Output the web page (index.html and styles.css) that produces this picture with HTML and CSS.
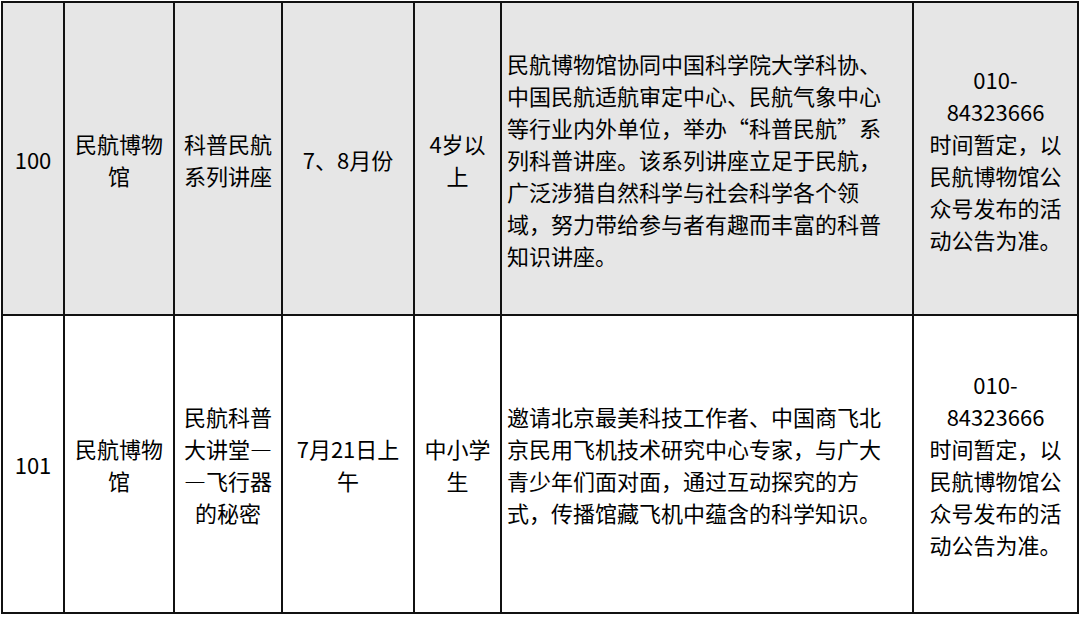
FILE: index.html
```html
<!DOCTYPE html>
<html lang="zh-CN">
<head>
<meta charset="utf-8">
<title>活动列表</title>
<link rel="stylesheet" href="styles.css">
</head>
<body>
<table class="events">
  <tbody>
    <tr class="row row-shaded">
      <td class="c-no">100</td>
      <td class="c-venue">民航博物馆</td>
      <td class="c-name">科普民航系列讲座</td>
      <td class="c-time">7、8月份</td>
      <td class="c-age">4岁以上</td>
      <td class="c-desc">民航博物馆协同中国科学院大学科协、中国民航适航审定中心、民航气象中心等行业内外单位，举办“科普民航”系列科普讲座。该系列讲座立足于民航，广泛涉猎自然科学与社会科学各个领域，努力带给参与者有趣而丰富的科普知识讲座。</td>
      <td class="c-note">010-84323666<br>时间暂定，以民航博物馆公众号发布的活动公告为准。</td>
    </tr>
    <tr class="row row-plain">
      <td class="c-no">101</td>
      <td class="c-venue">民航博物馆</td>
      <td class="c-name">民航科普大讲堂—<wbr>—飞行器的秘密</td>
      <td class="c-time">7月21日上午</td>
      <td class="c-age">中小学生</td>
      <td class="c-desc">邀请北京最美科技工作者、中国商飞北京民用飞机技术研究中心专家，与广大青少年们面对面，通过互动探究的方式，传播馆藏飞机中蕴含的科学知识。</td>
      <td class="c-note">010-84323666<br>时间暂定，以民航博物馆公众号发布的活动公告为准。</td>
    </tr>
  </tbody>
</table>
</body>
</html>
```
FILE: styles.css
```css
html, body {
  margin: 0;
  padding: 0;
  background: #ffffff;
}

.events {
  margin: 1px 0 0 1px;
  width: 1078px;
  table-layout: fixed;
  border-collapse: separate;
  border-spacing: 0;
  border-left: 2px solid #111;
  border-top: 2px solid #111;
  font-family: "Noto Sans CJK SC", "Noto Sans", sans-serif;
  font-size: 22px;
  line-height: 32px;
  color: #000;
}

.events td {
  box-sizing: border-box;
  border-right: 2px solid #111;
  border-bottom: 2px solid #111;
  padding: 0 8px;
  text-align: center;
  vertical-align: middle;
  word-break: normal;
}

.row-shaded td {
  background: #e6e6e6;
  height: 313px;
}

.row-plain td {
  background: #ffffff;
  height: 298px;
}

.c-no { width: 62px; }
.c-venue { width: 110px; }
.c-name { width: 108px; }
.c-time { width: 132px; }
.c-age { width: 87px; }

.events td.c-desc {
  width: 412px;
  text-align: left;
  padding: 0 25px 0 5px;
}

.events td.c-note {
  width: 165px;
  padding: 0 12px;
}
```
